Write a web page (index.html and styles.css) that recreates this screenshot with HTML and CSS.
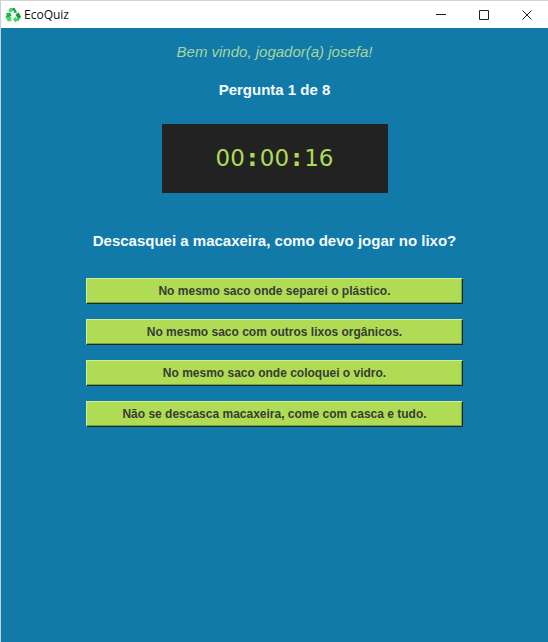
FILE: index.html
```html
<!DOCTYPE html>
<html lang="pt-BR">
<head>
<meta charset="utf-8">
<meta name="viewport" content="width=device-width, initial-scale=1">
<title>EcoQuiz</title>
<link rel="stylesheet" href="styles.css">
</head>
<body>
<div class="window">
  <header class="titlebar">
    <svg class="logo" viewBox="0 0 16 16" aria-hidden="true">
      <path fill="#18a34a" d="M5.1 1h4.4l2.7 4.6-4 .3.9-1L8 2.8 6.8 4.8 4 3z"/>
      <path fill="#45db63" d="M5.1 1h2.8L6 5.4 3.2 3.9z"/>
      <path fill="#18b54c" d="M.8 6.2l4.4-.7 1.6 4-1.4-.6-1.1 1.8H6v3.4H3L.5 10.3l1.4-2.7z"/>
      <path fill="#45db63" d="M.6 10h5.8v4.3H3z"/>
      <path fill="#45db63" d="M10.6 7.4l3-2 2.3 4.4-2.3 4.3-2.6.2v1.4L7.7 12.4l3.2-3V11h1.4z"/>
      <path fill="#149a45" d="M10.6 7.4l3-2 2.3 4.4-1.2 1.6-2.4-.9z"/>
    </svg>
    <span class="title">EcoQuiz</span>
    <div class="controls">
      <button class="control" type="button" aria-label="Minimizar"><svg viewBox="0 0 10 10"><path d="M0 4.5h10"/></svg></button>
      <button class="control" type="button" aria-label="Maximizar"><svg viewBox="0 0 10 10"><path d="M.5.5h9v9h-9z"/></svg></button>
      <button class="control" type="button" aria-label="Fechar"><svg viewBox="0 0 10 10"><path d="M.5.5l9 9M9.5.5l-9 9"/></svg></button>
    </div>
  </header>
  <main class="quiz">
    <p class="welcome">Bem vindo, jogador(a) josefa!</p>
    <p class="progress">Pergunta 1 de 8</p>
    <div class="timer" role="timer"><span>00</span><span class="colon">:</span><span>00</span><span class="colon">:</span><span>16</span></div>
    <h1 class="question">Descasquei a macaxeira, como devo jogar no lixo?</h1>
    <div class="answers">
      <button class="answer" type="button">No mesmo saco onde separei o plástico.</button>
      <button class="answer" type="button">No mesmo saco com outros lixos orgânicos.</button>
      <button class="answer" type="button">No mesmo saco onde coloquei o vidro.</button>
      <button class="answer" type="button">Não se descasca macaxeira, come com casca e tudo.</button>
    </div>
  </main>
</div>
</body>
</html>
```

FILE: styles.css
```css
* {
  box-sizing: border-box;
}

body {
  margin: 0;
  font-family: "Liberation Sans", Arial, sans-serif;
}

.window {
  display: flex;
  flex-direction: column;
  min-height: 100vh;
  border-top: 1px solid #d4d4d4;
  border-left: 1px solid #c3d3da;
}

.titlebar {
  display: flex;
  align-items: center;
  height: 27px;
  padding-left: 4px;
  background: #fff;
}

.logo {
  width: 16px;
  height: 16px;
}

.title {
  margin-left: 3px;
  font: 12px/16px "Open Sans", sans-serif;
  color: #111;
}

.controls {
  display: flex;
  margin-left: auto;
}

.control {
  display: flex;
  align-items: center;
  justify-content: center;
  width: 43px;
  height: 26px;
  padding: 0;
  border: 0;
  background: none;
}

.control svg {
  width: 10px;
  height: 10px;
  fill: none;
  stroke: #222;
}

.quiz {
  display: flex;
  flex: 1;
  flex-direction: column;
  align-items: center;
  padding-top: 14px;
  background: #117aa8;
}

.welcome,
.progress,
.question {
  margin: 0;
  font-size: 15px;
  line-height: 20px;
  text-align: center;
}

.welcome {
  color: #a8d5a0;
  font-style: italic;
}

.progress {
  margin-top: 18px;
  color: #f4faff;
  font-weight: bold;
}

.timer {
  display: flex;
  justify-content: center;
  min-width: 226px;
  margin-top: 24px;
  padding: 20px 48px;
  background: #222;
  color: #afdb55;
  font: 23px/29px "DejaVu Sans", sans-serif;
}

.colon {
  width: 15px;
  font-weight: bold;
  text-align: center;
}

.question {
  margin-top: 38px;
  color: #f4faff;
  font-weight: bold;
}

.answers {
  display: flex;
  flex-direction: column;
  gap: 15px;
  width: 69%;
  margin-top: 27px;
}

.answer {
  min-height: 26px;
  padding: 1px 8px;
  border: 1px solid;
  border-color: #d3ee98 #18291f #18291f #d3ee98;
  box-shadow: inset -1px -1px #7f9f3e;
  background: #afdb55;
  color: #383c32;
  font: bold 12px/20px "Liberation Sans", Arial, sans-serif;
}
```
